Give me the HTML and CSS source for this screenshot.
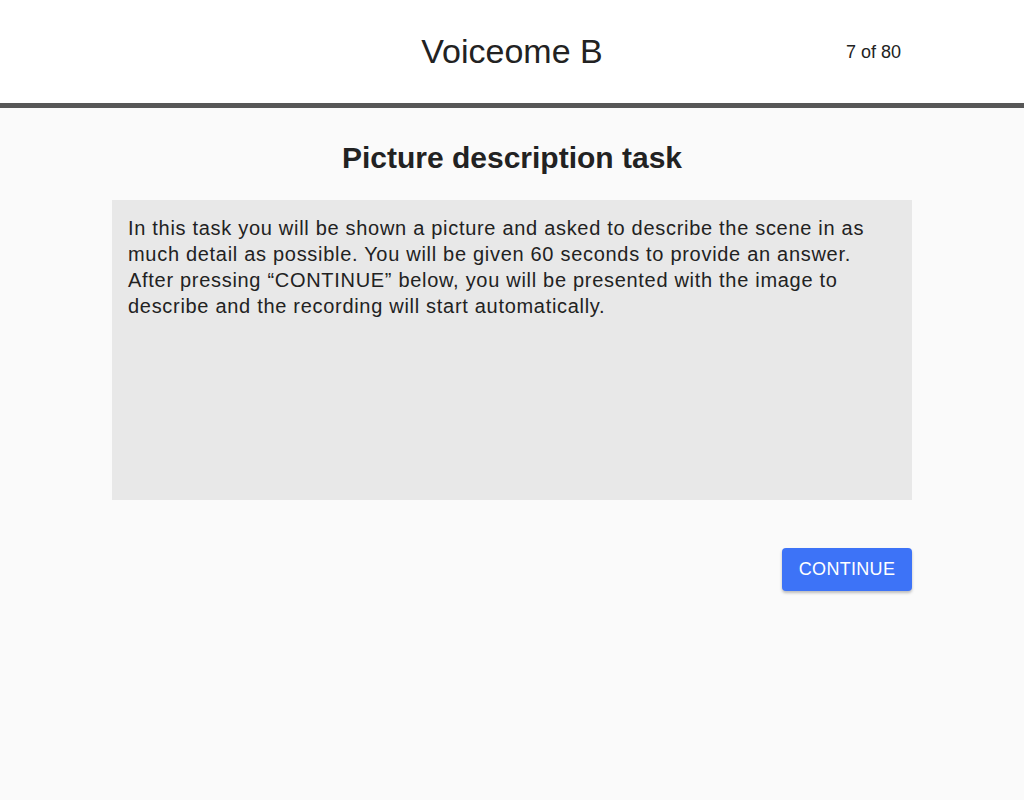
FILE: index.html
```html
<!DOCTYPE html>
<html>
<head>
<meta charset="utf-8">
<link rel="stylesheet" href="styles.css">
</head>
<body>
<header class="topbar">
  <div class="topbar-inner">
    <h1 class="app-title">Voiceome B</h1>
    <span class="progress">7 of 80</span>
  </div>
</header>
<main class="content">
  <h2 class="task-title">Picture description task</h2>
  <div class="instructions">
    <p>In this task you will be shown a picture and asked to describe the scene in as much detail as possible. You will be given 60 seconds to provide an answer. After pressing “CONTINUE” below, you will be presented with the image to describe and the recording will start automatically.</p>
  </div>
  <div class="actions">
    <button class="btn-continue">CONTINUE</button>
  </div>
</main>
</body>
</html>
```
FILE: styles.css
```css
html, body {
  margin: 0;
  padding: 0;
  height: 100%;
}
body {
  background: #fafafa;
  font-family: "Liberation Sans", Arial, sans-serif;
  color: #222;
}
.topbar {
  background: #fff;
  height: 103px;
  border-bottom: 5px solid #575757;
}
.topbar-inner {
  position: relative;
  height: 100%;
  display: flex;
  align-items: center;
  justify-content: center;
}
.app-title {
  margin: 0;
  font-size: 34px;
  font-weight: normal;
  color: #222;
  line-height: 1;
  position: relative;
  top: -1px;
}
.progress {
  position: absolute;
  left: 846px;
  top: 42px;
  font-size: 18px;
  line-height: 20px;
  color: #222;
}
.content {
  width: 800px;
  margin: 0 auto;
  padding-top: 33px;
}
.task-title {
  margin: 0 0 25px;
  text-align: center;
  font-size: 30px;
  font-weight: bold;
  line-height: 34px;
  color: #222;
}
.instructions {
  background: #e8e8e8;
  height: 300px;
  box-sizing: border-box;
  padding: 15px 16px;
}
.instructions p {
  margin: 0;
  font-size: 20px;
  line-height: 26px;
  letter-spacing: 0.7px;
  color: #222;
}
.actions {
  display: flex;
  justify-content: flex-end;
  margin-top: 48px;
}
.btn-continue {
  background: #3d73f7;
  color: #fff;
  border: none;
  border-radius: 4px;
  width: 130px;
  height: 43px;
  font-family: "Liberation Sans", Arial, sans-serif;
  font-size: 18px;
  letter-spacing: 0.3px;
  box-shadow: 0 2px 3px rgba(0,0,0,0.25);
  padding: 0;
}
```
